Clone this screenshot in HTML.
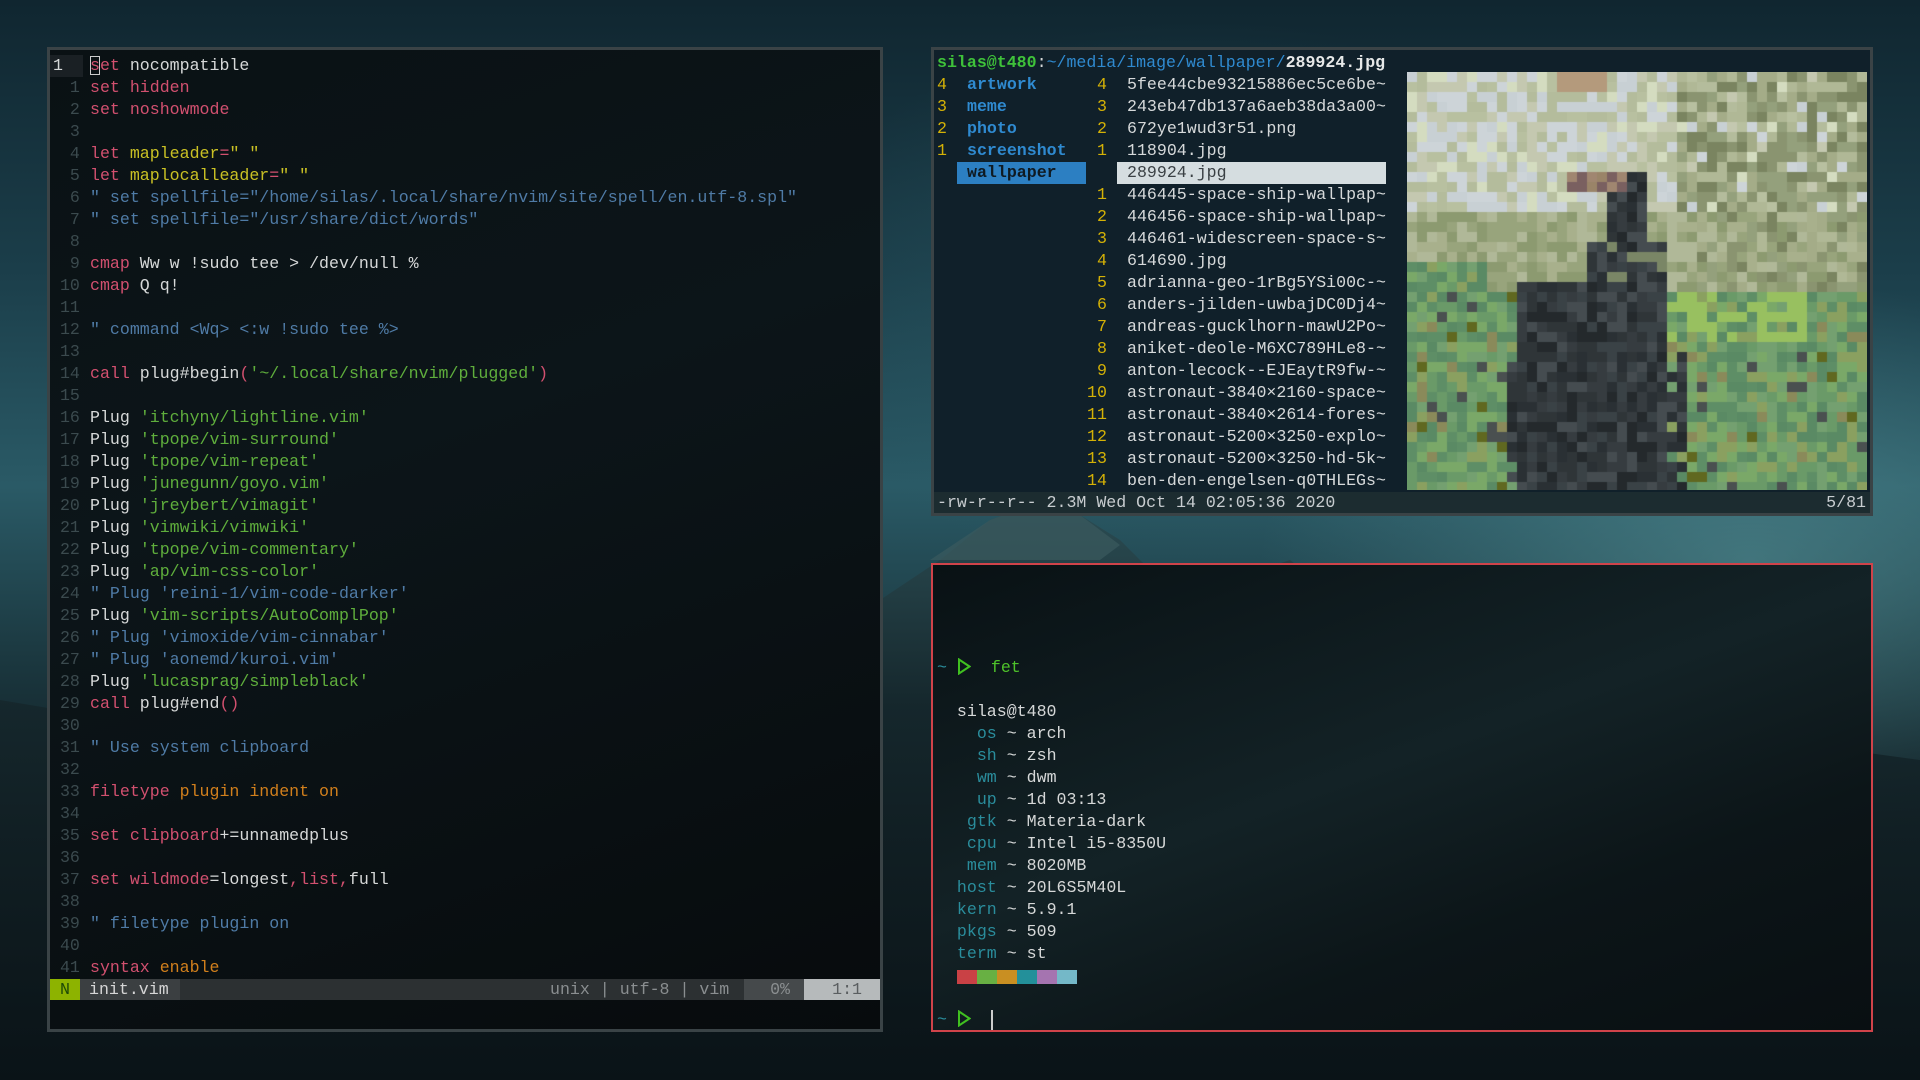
<!DOCTYPE html>
<html><head><meta charset="utf-8"><style>
*{margin:0;padding:0;box-sizing:border-box}
html,body{width:1920px;height:1080px;overflow:hidden}
body{position:relative;font-family:"Liberation Mono","DejaVu Sans Mono",monospace;font-size:16.6px;
background:linear-gradient(180deg,#102630 0%,#1b3e4a 25%,#2a5a66 45%,#1c3a42 60%,#0e1a1f 76%,#0a1317 100%);}
.bgr{position:absolute;left:0;top:0;width:1920px;height:1080px;background:radial-gradient(ellipse 700px 400px at 1750px 560px,rgba(90,150,155,.55),transparent 70%),radial-gradient(ellipse 600px 400px at 1200px 300px,rgba(50,100,110,.4),transparent 70%)}
.win{position:absolute;line-height:22px;overflow:hidden}
.ln{position:absolute;left:0;height:22px;white-space:pre}
.fl{height:22px;white-space:pre}
.r{color:#d2506f}.w{color:#d6d8d8}.y{color:#c9c024}.c{color:#4f7ba6}.g{color:#5fae3c}.o{color:#d17f1c}.n{color:#3b4a4e}
.yl{color:#d4b106}.bl{color:#2f8ad0;font-weight:bold}.tl{color:#2a8d9c}.gr{color:#3fc23a}
.sb{position:absolute;top:0;height:21px;line-height:21px;white-space:pre}
.tri{display:inline-block;vertical-align:-3px}
</style></head><body>
<div class="bgr"></div>
<svg style="position:absolute;left:0;top:0" width="1920" height="1080">
<defs><linearGradient id="mg" x1="0" y1="0" x2="0" y2="1"><stop offset="0" stop-color="#2c4c52"/><stop offset=".35" stop-color="#15262b"/><stop offset="1" stop-color="#0a1317"/></linearGradient></defs>
<path d="M880 600 L940 560 L990 520 L1030 505 L1080 515 L1120 540 L1160 580 L1200 600 L1230 590 L1260 570 L1290 560 L1310 575 L1330 600 L1400 640 L1500 660 L1600 700 L1700 730 L1920 760 L1920 1080 L0 1080 L0 700 L120 720 L300 600 L880 600Z" fill="url(#mg)" opacity=".9"/>
<path d="M930 560 L990 520 L1030 505 L1080 515 L1120 545 L1100 560Z" fill="#3a5a5e" opacity=".7"/>
</svg>

<!-- VIM -->
<div class="win" style="left:47px;top:47px;width:836px;height:985px;border:3px solid #3a4346;background:linear-gradient(160deg,#0a1114 0%,#0c1519 40%,#070b0d 100%)">
<div class="ln" style="top:5px;width:830px"><span style="position:absolute;left:0;top:0;width:33px;height:22px;background:#1a2024"></span><span class="w" style="position:absolute;left:3px">1</span><span style="position:absolute;left:40px"><span class="r" style="outline:1.5px solid #ccc;outline-offset:-1px">s</span><span class="r">et</span><span class="w"> nocompatible</span></span></div>
<div id="v" style="position:absolute;left:0;top:5px"></div>
<div style="position:absolute;left:0;top:929px;width:830px;height:21px;background:#2c3032">
<span class="sb" style="left:0;width:30px;background:#8db300;color:#1e4a06;text-align:center">N</span>
<span class="sb" style="left:30px;width:100px;background:#3b3f41;color:#d6d6d6;padding-left:9px">init.vim</span>
<span class="sb" style="left:500px;color:#8a8e90">unix | utf-8 | vim</span>
<span class="sb" style="left:694px;width:60px;background:#45494b;color:#8a8e90;text-align:right;padding-right:14px">0%</span>
<span class="sb" style="left:754px;width:76px;background:#b6babb;color:#5a5e60;text-align:right;padding-right:18px">1:1</span>
</div>
</div>

<!-- RANGER -->
<div class="win" style="left:931px;top:47px;width:942px;height:469px;border:3px solid #3a4346;background:#10202a">
<canvas id="cv" width="460" height="418" style="position:absolute;left:473px;top:22px"></canvas>
<div id="rg" style="position:absolute;left:3px;top:0"></div>
</div>

<!-- FET -->
<div class="win" style="left:931px;top:563px;width:942px;height:469px;border:2px solid #d0434a;background:linear-gradient(160deg,#091114 0%,#132226 45%,#0c1518 70%,#090f12 100%)">
<div style="position:absolute;left:4px;top:92px">
<div class="fl"><span class="tl">~</span> <svg class="tri" width="14" height="17"><path d="M2 1.5 L12.5 8.5 L2 15.5Z" fill="none" stroke="#40c020" stroke-width="2"/></svg>  <span style="color:#4ec22a">fet</span></div>
<div class="fl"> </div>
<div class="fl w">  silas@t480</div>
<div class="fl">    <span class="tl">os</span> <span class="w">~ arch</span></div>
<div class="fl">    <span class="tl">sh</span> <span class="w">~ zsh</span></div>
<div class="fl">    <span class="tl">wm</span> <span class="w">~ dwm</span></div>
<div class="fl">    <span class="tl">up</span> <span class="w">~ 1d 03:13</span></div>
<div class="fl">   <span class="tl">gtk</span> <span class="w">~ Materia-dark</span></div>
<div class="fl">   <span class="tl">cpu</span> <span class="w">~ Intel i5-8350U</span></div>
<div class="fl">   <span class="tl">mem</span> <span class="w">~ 8020MB</span></div>
<div class="fl">  <span class="tl">host</span> <span class="w">~ 20L6S5M40L</span></div>
<div class="fl">  <span class="tl">kern</span> <span class="w">~ 5.9.1</span></div>
<div class="fl">  <span class="tl">pkgs</span> <span class="w">~ 509</span></div>
<div class="fl">  <span class="tl">term</span> <span class="w">~ st</span></div>
<div class="fl" style="position:relative"><span style="position:absolute;left:20px;top:5px;width:120px;height:14px;background:linear-gradient(90deg,#c94145 0 20px,#68b043 20px 40px,#c98f22 40px 60px,#23909a 60px 80px,#a574b0 80px 100px,#74b8c8 100px)"></span></div>
<div class="fl"> </div>
<div class="fl"><span class="tl">~</span> <svg class="tri" width="14" height="17"><path d="M2 1.5 L12.5 8.5 L2 15.5Z" fill="none" stroke="#40c020" stroke-width="2"/></svg>  <span style="display:inline-block;width:2px;height:20px;background:#ccc;vertical-align:middle"></span></div>
</div>
</div>

<script>
var L=[
'',
'<span class="r">set hidden</span>',
'<span class="r">set noshowmode</span>',
'',
'<span class="r">let</span> <span class="y">mapleader</span><span class="r">=</span><span class="y">" "</span>',
'<span class="r">let</span> <span class="y">maplocalleader</span><span class="r">=</span><span class="y">" "</span>',
'<span class="c">" set spellfile="/home/silas/.local/share/nvim/site/spell/en.utf-8.spl"</span>',
'<span class="c">" set spellfile="/usr/share/dict/words"</span>',
'',
'<span class="r">cmap</span><span class="w"> Ww w !sudo tee &gt; /dev/null %</span>',
'<span class="r">cmap</span><span class="w"> Q q!</span>',
'',
'<span class="c">" command &lt;Wq&gt; &lt;:w !sudo tee %&gt;</span>',
'',
'<span class="r">call</span><span class="w"> plug#begin</span><span class="r">(</span><span class="g">\'~/.local/share/nvim/plugged\'</span><span class="r">)</span>',
'',
'P\'itchyny/lightline.vim\'','P\'tpope/vim-surround\'','P\'tpope/vim-repeat\'','P\'junegunn/goyo.vim\'','P\'jreybert/vimagit\'','P\'vimwiki/vimwiki\'','P\'tpope/vim-commentary\'','P\'ap/vim-css-color\'',
'<span class="c">" Plug \'reini-1/vim-code-darker\'</span>',
'P\'vim-scripts/AutoComplPop\'',
'<span class="c">" Plug \'vimoxide/vim-cinnabar\'</span>',
'<span class="c">" Plug \'aonemd/kuroi.vim\'</span>',
'P\'lucasprag/simpleblack\'',
'<span class="r">call</span><span class="w"> plug#end</span><span class="r">()</span>',
'',
'<span class="c">" Use system clipboard</span>',
'',
'<span class="r">filetype</span> <span class="o">plugin indent on</span>',
'',
'<span class="r">set clipboard</span><span class="w">+=unnamedplus</span>',
'',
'<span class="r">set wildmode</span><span class="w">=longest</span><span class="r">,list,</span><span class="w">full</span>',
'',
'<span class="c">" filetype plugin on</span>',
'',
'<span class="r">syntax</span> <span class="o">enable</span>'];
var h='';
for(var i=1;i<L.length;i++){var s=L[i];if(s[0]=='P')s='<span class="w">Plug</span> <span class="g">'+s.slice(1)+'</span>';
var num=String(i);while(num.length<3)num=' '+num;
h+='<div class="ln" style="top:'+(i*22)+'px;width:830px"><span class="n" style="position:absolute;left:0">'+num+'</span><span style="position:absolute;left:40px">'+s+'</span></div>';}
document.getElementById('v').innerHTML=h;
var R=[['4','artwork','4','5fee44cbe93215886ec5ce6be~'],['3','meme','3','243eb47db137a6aeb38da3a00~'],['2','photo','2','672ye1wud3r51.png'],['1','screenshot','1','118904.jpg'],['','wallpaper','','289924.jpg'],
['','','1','446445-space-ship-wallpap~'],['','','2','446456-space-ship-wallpap~'],['','','3','446461-widescreen-space-s~'],['','','4','614690.jpg'],['','','5','adrianna-geo-1rBg5YSi00c-~'],['','','6','anders-jilden-uwbajDC0Dj4~'],['','','7','andreas-gucklhorn-mawU2Po~'],['','','8','aniket-deole-M6XC789HLe8-~'],['','','9','anton-lecock--EJEaytR9fw-~'],['','','10','astronaut-3840\u00d72160-space~'],['','','11','astronaut-3840\u00d72614-fores~'],['','','12','astronaut-5200\u00d73250-explo~'],['','','13','astronaut-5200\u00d73250-hd-5k~'],['','','14','ben-den-engelsen-q0THLEGs~']];
var g='<div class="ln" style="top:2px"><span class="gr" style="font-weight:bold">silas@t480</span><span class="w">:</span><span style="color:#2f8ad0">~/media/image/wallpaper/</span><span style="color:#e6e8e8;font-weight:bold">289924.jpg</span></div>';
for(var j=0;j<R.length;j++){var r=R[j],t=2+(j+1)*22,sel=j==4;
g+='<div class="ln" style="top:'+t+'px;width:460px">';
g+='<span class="yl" style="position:absolute;left:0">'+r[0]+'</span>';
if(sel)g+='<span style="position:absolute;left:20px;width:129px;height:22px;background:#2c7fc2;color:#0f1a22;padding-left:10px;font-weight:bold">'+r[1]+'</span>';
else if(r[1])g+='<span class="bl" style="position:absolute;left:30px">'+r[1]+'</span>';
var nn=r[2];if(nn.length<2)nn=' '+nn;
g+='<span class="yl" style="position:absolute;left:150px">'+nn+'</span>';
if(sel)g+='<span style="position:absolute;left:180px;width:269px;height:22px;background:#d5dde0;color:#3a4044;padding-left:10px">'+r[3]+'</span>';
else g+='<span style="position:absolute;left:190px;color:#d6d9da">'+r[3]+'</span>';
g+='</div>';}
g+='<div class="ln" style="top:442px;left:-3px;width:936px;background:#1c2c30;padding-left:3px"><span style="color:#c8cdd0">-rw-r--r-- 2.3M Wed Oct 14 02:05:36 2020</span><span style="position:absolute;right:4px;color:#c8cdd0">5/81</span></div>';
document.getElementById('rg').innerHTML=g;
var cv=document.getElementById('cv').getContext('2d');
var seed=7;function rnd(){seed=(seed*16807)%2147483647;return seed/2147483647;}
function pick(a){return a[Math.floor(rnd()*a.length)];}
var sky=['#c8d0d4','#d4dcc0','#b8c0a0','#c4c8b0','#cdd4d8','#b4bc9c'];
var skyR=['#94a07c','#7a8460','#a4ac88','#8a9470','#b0b896'];
var mid=['#a8b08c','#b0b898','#98a47c','#8c9a70'];
var grn=['#6a9a68','#5a8a64','#7aa868','#8aa060','#5e8e66','#74a070'];
var spr=['#606820','#8a8a5a','#4a5050'];
var dk=['#2f3538','#3a4246','#2a3034','#454c50','#363c40','#24292c'];
for(var by=0;by<42;by++)for(var bx=0;bx<46;bx++){
 var c;
 if(by<14){c=(bx>26&&rnd()<0.8)?pick(skyR):pick(sky);}
 else if(by<22){c=(bx<8&&by>18)?pick(grn):(bx>28?pick(skyR.concat(mid)):pick(mid));}
 else{c=rnd()<0.12?pick(spr):pick(grn);if(bx>24&&bx<40&&by<27&&rnd()<0.5)c='#98c060';}
 if(bx>=20&&bx<=23&&by>=10&&by<20)c=pick(dk);
 if(bx>=18&&bx<=25&&by>=17&&by<22)c=pick(dk.concat(['#7a8666']));
 if(by>=21&&bx>=11&&bx<=25)c=pick(dk);
 if(by>=28&&bx>=10&&bx<=27&&rnd()<0.7)c=pick(dk);
 if(by>=10&&by<=11&&bx>=16&&bx<=21)c=pick(['#9a8468','#a08670','#7a6060']);
 if(by<2&&bx>=15&&bx<=19)c='#b49a7c';
 cv.fillStyle=c;cv.fillRect(bx*10,by*10,10,10);}
</script>
</body></html>
